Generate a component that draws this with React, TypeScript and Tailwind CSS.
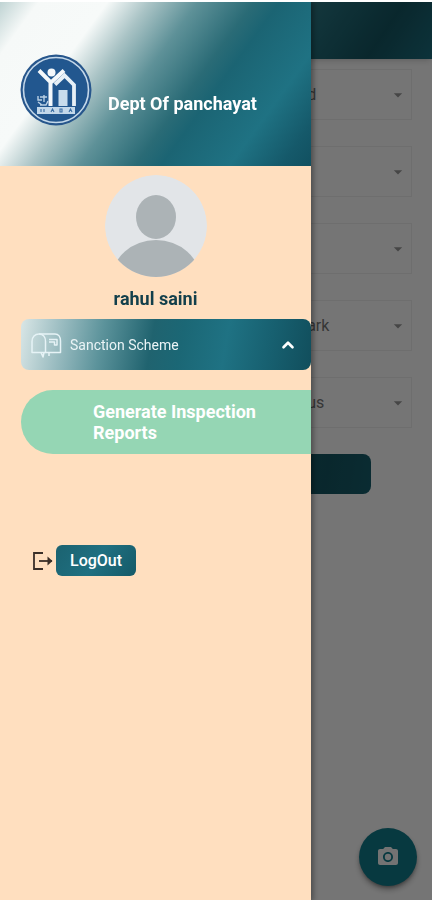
import { ChevronUp } from 'lucide-react';
import { MdArrowDropDown, MdCameraAlt } from 'react-icons/md';

type Field = {
  id: string;
  value: string;
};

const fields: Field[] = [
  { id: 'field-1', value: 'd' },
  { id: 'field-2', value: '' },
  { id: 'field-3', value: '' },
  { id: 'field-4', value: 'ark' },
  { id: 'field-5', value: 'us' },
];

const Logo = () => (
  <svg viewBox="0 0 72 72" className="h-18 w-18 shrink-0" aria-hidden="true">
    <circle cx="36" cy="36" r="35.5" fill="#27568c" />
    <circle cx="36" cy="36" r="32.5" fill="none" stroke="#c3d8ea" strokeWidth="1.6" />
    <circle cx="36" cy="36" r="31" fill="#22578f" />
    <circle cx="31.5" cy="18.5" r="4" fill="#f4f8fb" />
    <path d="M19 16.5 L30.5 28 L30.5 52 M44 16.5 L31.5 28" fill="none" stroke="#f4f8fb" strokeWidth="4" />
    <path d="M35 30.5 L44.5 21.5 L54 31 V52" fill="none" stroke="#e6eff6" strokeWidth="3.8" />
    <rect x="38.5" y="36" width="9" height="16" fill="#c8dcec" />
    <path d="M18 42 v4 h4 M24 41 v7 M18 48 l4 3 M20 43 h7 M20 51 h6 l2 -4" fill="none" stroke="#b9d0e4" strokeWidth="1.4" />
    <rect x="17" y="53" width="38" height="7" fill="#c3d8ea" />
    <path d="M21 55 v3 M24 55 v3 M31 58 l1.5 -3 l1.5 3 M40 55 v3 h2 v-3 z M49 58 l1.5 -3 l1.5 3" fill="none" stroke="#3a6ea4" strokeWidth="1.1" />
  </svg>
);

const Avatar = () => (
  <svg viewBox="0 0 102 102" className="h-[102px] w-[102px]" role="img" aria-label="Profile">
    <clipPath id="avatar-clip">
      <circle cx="51" cy="51" r="51" />
    </clipPath>
    <g clipPath="url(#avatar-clip)">
      <circle cx="51" cy="51" r="51" fill="#e2e5e8" />
      <ellipse cx="51" cy="42" rx="20" ry="22" fill="#acb3b6" />
      <ellipse cx="51" cy="104" rx="44" ry="39" fill="#acb3b6" />
    </g>
  </svg>
);

const MailboxIcon = () => (
  <svg viewBox="0 0 32 26" className="h-[26px] w-8" fill="none" stroke="#e6f3f6" strokeWidth="1.5" strokeLinejoin="round" aria-hidden="true">
    <path d="M2 20.5 V9.5 C2 5 5 2 9 2 C13 2 15.5 5 15.5 9.5 V20.5 Z" />
    <path d="M9 2 H25 C28.5 2 30.5 5 30.5 9 V20.5 H15.5" />
    <path d="M19 7.5 H27 V13 H24.5 V10 H19" />
    <path d="M11 20.5 L13 25 L14 20.5 M19 20.5 V24" />
  </svg>
);

const LogoutIcon = () => (
  <svg viewBox="0 0 22 20" className="h-5 w-[22px]" fill="none" stroke="#3b2f28" strokeWidth="1.8" aria-hidden="true">
    <path d="M11 2 H2 V18 H11" />
    <path d="M7 10 H20" />
    <path d="M15.5 5.5 L20.5 10 L15.5 14.5 Z" fill="#3b2f28" stroke="none" />
  </svg>
);

const InspectionForm = () => (
  <div className="min-h-screen">
    <header className="h-[57px] bg-[linear-gradient(124deg,#f4f8f7_0%,#5a959d_45%,#246f7c_72%,#155662_86%,#1d6f80_100%)] shadow-md" />
    <main className="flex flex-col gap-[26px] px-5 pt-[10px]">
      {fields.map((field) => (
        <div key={field.id} className="relative">
          <select
            id={field.id}
            aria-label={field.id}
            defaultValue={field.value}
            className="block h-[51px] w-full appearance-none border border-[#efefef] bg-transparent pl-[73%] text-base text-[#777]"
          >
            <option value={field.value}>{field.value}</option>
          </select>
          <MdArrowDropDown className="pointer-events-none absolute top-4 right-1 h-5 w-5 text-[#999]" />
        </div>
      ))}
      <button type="button" aria-label="Submit" className="mx-auto h-10 w-[79%] rounded-lg bg-[linear-gradient(100deg,#1d6f80,#155662_85%,#17606e)]" />
    </main>
    <button
      type="button"
      aria-label="Camera"
      className="fixed right-[15px] bottom-[14px] flex h-[58px] w-[58px] items-center justify-center rounded-full bg-[#117c8c] text-[#fafafa] shadow-md shadow-black/40"
    >
      <MdCameraAlt className="h-6 w-6" />
    </button>
  </div>
);

const Drawer = () => (
  <aside className="absolute top-0 bottom-0 left-0 flex w-[72%] flex-col bg-[#ffdfbf] shadow-[2px_0_6px_rgba(0,0,0,0.4)]">
    <div className="flex h-[164px] items-end gap-4 bg-[linear-gradient(126deg,#bfd3d3_0%,#f6f9f8_9%,#f7faf9_25%,#a9c3c5_35%,#5e9198_46%,#2a6b76_59%,#1b6473_65%,#1f7283_81%,#15596a_93%,#115060_100%)] pb-10 pl-5">
      <Logo />
      <h1 className="pb-2 text-lg font-bold text-white">Dept Of panchayat</h1>
    </div>

    <div className="flex flex-col items-center gap-[10px] pt-[9px]">
      <Avatar />
      <p className="text-lg leading-6 font-bold text-[#123f4b]">rahul saini</p>
    </div>

    <nav className="mt-2 flex flex-col gap-5 pl-[21px]">
      <button
        type="button"
        aria-expanded="true"
        className="flex h-[51px] items-center rounded-lg bg-[linear-gradient(100deg,#d9e6e6_0%,#a3c2c6_12%,#5c939b_28%,#20636f_45%,#1b6775_55%,#1f7283_70%,#176070_85%,#114e5c_100%)] pr-[14px] pl-[9px] text-left text-sm text-[#eaf4f6]"
      >
        <MailboxIcon />
        <span className="ml-2 flex-1">Sanction Scheme</span>
        <ChevronUp className="h-[18px] w-[18px] text-white" strokeWidth={3.5} />
      </button>
      <a href="#reports" className="rounded-l-full bg-[#95d6b4] py-[11px] pr-10 pl-18 text-lg leading-[21px] font-bold text-white">
        Generate Inspection Reports
      </a>
    </nav>

    <div className="mt-[91px] flex items-center gap-0.5 pl-8">
      <LogoutIcon />
      <button type="button" className="h-[31px] rounded-md bg-[linear-gradient(124deg,#1b6270,#1f7081_50%,#155a68)] px-[14px] text-base font-medium text-white">
        LogOut
      </button>
    </div>
  </aside>
);

const App = () => {
  return (
    <div className="min-h-screen bg-white pt-0.5 font-[Roboto,sans-serif]">
      <div className="relative overflow-hidden">
        <InspectionForm />
        <div className="absolute inset-0 bg-black/54" />
        <Drawer />
      </div>
    </div>
  );
};

export default App;
